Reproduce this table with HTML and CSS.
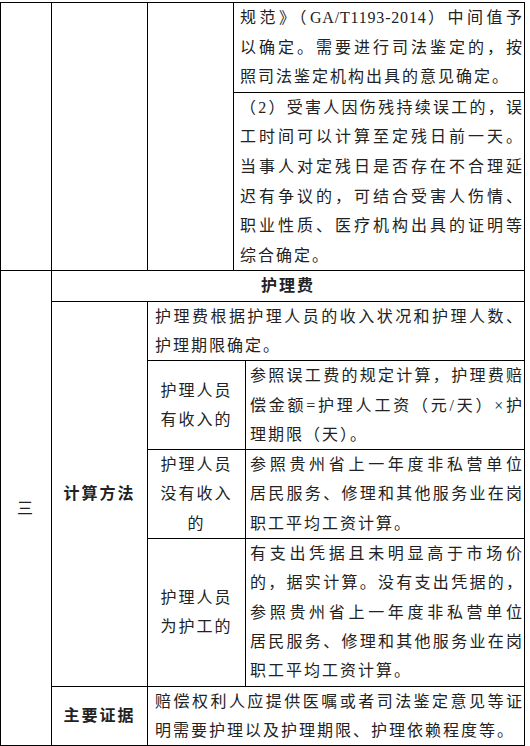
FILE: index.html
```html
<!DOCTYPE html>
<html lang="zh-CN">
<head>
<meta charset="utf-8">
<title>护理费</title>
<link rel="stylesheet" href="styles.css">
</head>
<body>
<table class="sheet">
  <colgroup>
    <col class="w-num">
    <col class="w-item">
    <col class="w-who">
    <col class="w-gap">
    <col class="w-text">
  </colgroup>
  <tbody class="part-prev">
    <tr>
      <td rowspan="2"></td>
      <td rowspan="2"></td>
      <td rowspan="2"></td>
      <td colspan="2" class="txt txt-prev">
        <span class="ln">规范》（<span class="latin">GA/T1193-2014</span>）中间值予</span>
        <span class="ln">以确定。需要进行司法鉴定的，按</span>
        <span class="ln end">照司法鉴定机构出具的意见确定。</span>
      </td>
    </tr>
    <tr>
      <td colspan="2" class="txt txt-prev">
        <span class="ln">（2）受害人因伤残持续误工的，误</span>
        <span class="ln">工时间可以计算至定残日前一天。</span>
        <span class="ln">当事人对定残日是否存在不合理延</span>
        <span class="ln">迟有争议的，可结合受害人伤情、</span>
        <span class="ln">职业性质、医疗机构出具的证明等</span>
        <span class="ln end">综合确定。</span>
      </td>
    </tr>
  </tbody>
  <tbody class="part-care">
    <tr>
      <td rowspan="6" class="center">三</td>
      <td colspan="4" class="center strong">护理费</td>
    </tr>
    <tr>
      <td rowspan="4" class="center strong">计算方法</td>
      <td colspan="3" class="txt txt-wide">
        <span class="ln">护理费根据护理人员的收入状况和护理人数、</span>
        <span class="ln end">护理期限确定。</span>
      </td>
    </tr>
    <tr>
      <td colspan="2" class="center">护理人员<br>有收入的</td>
      <td class="txt txt-case">
        <span class="ln">参照误工费的规定计算，护理费赔</span>
        <span class="ln">偿金额=护理人工资（元/天）×护</span>
        <span class="ln end">理期限（天）。</span>
      </td>
    </tr>
    <tr>
      <td colspan="2" class="center">护理人员<br>没有收入<br>的</td>
      <td class="txt txt-case">
        <span class="ln">参照贵州省上一年度非私营单位</span>
        <span class="ln">居民服务、修理和其他服务业在岗</span>
        <span class="ln end">职工平均工资计算。</span>
      </td>
    </tr>
    <tr>
      <td colspan="2" class="center">护理人员<br>为护工的</td>
      <td class="txt txt-case">
        <span class="ln">有支出凭据且未明显高于市场价</span>
        <span class="ln">的，据实计算。没有支出凭据的，</span>
        <span class="ln">参照贵州省上一年度非私营单位</span>
        <span class="ln">居民服务、修理和其他服务业在岗</span>
        <span class="ln end">职工平均工资计算。</span>
      </td>
    </tr>
    <tr>
      <td class="center strong">主要证据</td>
      <td colspan="3" class="txt txt-wide">
        <span class="ln">赔偿权利人应提供医嘱或者司法鉴定意见等证</span>
        <span class="ln end">明需要护理以及护理期限、护理依赖程度等。</span>
      </td>
    </tr>
  </tbody>
</table>
</body>
</html>
```

FILE: styles.css
```css
html,
body {
  margin: 0;
  padding: 0;
  background: #ffffff;
}

body {
  font-family: "Liberation Serif", "Noto Sans CJK SC", sans-serif;
  font-size: 16px;
  color: #222222;
  letter-spacing: 2px;
}

.sheet {
  border-collapse: collapse;
  table-layout: fixed;
  width: 524px;
  margin-top: 2px;
}

.w-num { width: 51px; }
.w-item { width: 96px; }
.w-who { width: 86px; }
.w-gap { width: 12px; }
.w-text { width: 279px; }

.sheet td {
  border: 1px solid #000000;
  padding: 0;
  vertical-align: middle;
  line-height: 29.3px;
}

.sheet .part-prev td {
  line-height: 29.6px;
}

.sheet .center {
  text-align: center;
}

.sheet .strong {
  font-weight: 700;
}

.sheet .txt {
  vertical-align: top;
  padding-right: 0;
}

.sheet .txt-prev {
  padding-left: 6px;
}

.sheet .txt-wide {
  padding-left: 7px;
}

.sheet .txt-case {
  padding-left: 4px;
}

.ln {
  display: block;
  text-align: justify;
  text-align-last: justify;
}

.ln.end {
  text-align-last: left;
}

.latin {
  letter-spacing: 0.8px;
}
```
